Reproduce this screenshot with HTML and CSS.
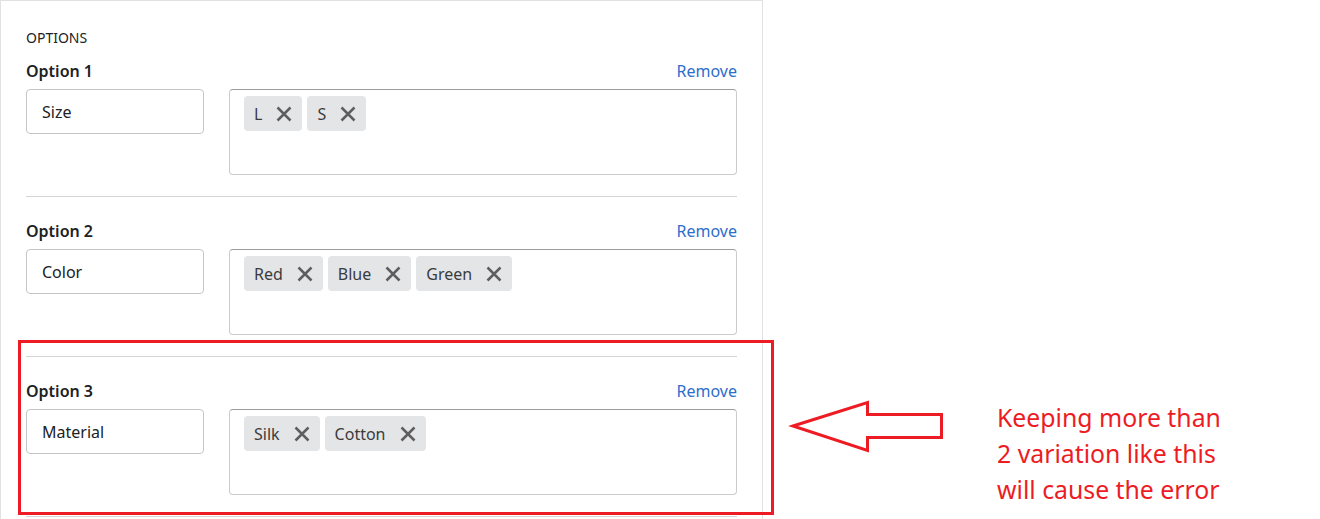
FILE: index.html
```html
<!DOCTYPE html>
<html lang="en">
<head>
<meta charset="utf-8">
<title>Options</title>
<link rel="stylesheet" href="styles.css">
</head>
<body>
<div class="page">
  <div class="card">
    <div class="card-title">OPTIONS</div>

    <div class="option option-first">
      <div class="option-head">
        <span class="option-label">Option 1</span>
        <a class="remove" href="#">Remove</a>
      </div>
      <div class="option-body">
        <div class="name-input">Size</div>
        <div class="values">
          <span class="tag">L<svg class="x" viewBox="0 0 16 16"><path d="M1.5 1.5L14.5 14.5M14.5 1.5L1.5 14.5"/></svg></span>
          <span class="tag">S<svg class="x" viewBox="0 0 16 16"><path d="M1.5 1.5L14.5 14.5M14.5 1.5L1.5 14.5"/></svg></span>
        </div>
      </div>
    </div>

    <div class="option">
      <div class="option-head">
        <span class="option-label">Option 2</span>
        <a class="remove" href="#">Remove</a>
      </div>
      <div class="option-body">
        <div class="name-input">Color</div>
        <div class="values">
          <span class="tag">Red<svg class="x" viewBox="0 0 16 16"><path d="M1.5 1.5L14.5 14.5M14.5 1.5L1.5 14.5"/></svg></span>
          <span class="tag">Blue<svg class="x" viewBox="0 0 16 16"><path d="M1.5 1.5L14.5 14.5M14.5 1.5L1.5 14.5"/></svg></span>
          <span class="tag">Green<svg class="x" viewBox="0 0 16 16"><path d="M1.5 1.5L14.5 14.5M14.5 1.5L1.5 14.5"/></svg></span>
        </div>
      </div>
    </div>

    <div class="option">
      <div class="option-head">
        <span class="option-label">Option 3</span>
        <a class="remove" href="#">Remove</a>
      </div>
      <div class="option-body">
        <div class="name-input">Material</div>
        <div class="values">
          <span class="tag">Silk<svg class="x" viewBox="0 0 16 16"><path d="M1.5 1.5L14.5 14.5M14.5 1.5L1.5 14.5"/></svg></span>
          <span class="tag">Cotton<svg class="x" viewBox="0 0 16 16"><path d="M1.5 1.5L14.5 14.5M14.5 1.5L1.5 14.5"/></svg></span>
        </div>
      </div>
    </div>
  </div>

  <div class="highlight"></div>
  <svg class="arrow" viewBox="0 0 190 70" width="190" height="70">
    <polygon points="23,36 97.5,12.5 97.5,24.5 171.5,24.5 171.5,47.5 97.5,47.5 97.5,60.5"/>
  </svg>
  <div class="note">Keeping more than<br>2 variation like this<br>will cause the error</div>
</div>
</body>
</html>
```
FILE: styles.css
```css
html, body {
  margin: 0;
  padding: 0;
  background: #ffffff;
}

body {
  font-family: "Noto Sans", "Open Sans", sans-serif;
  color: #202223;
  overflow: hidden;
}

.page {
  position: relative;
  width: 1320px;
  height: 519px;
}

.card {
  width: 711px;
  padding: 27px 25px 40px;
  border: 1px solid #dfe1e3;
}

.card-title {
  font-size: 14px;
  line-height: 20px;
  margin-bottom: 11px;
  color: #202223;
}

.option {
  padding-top: 22px;
  padding-bottom: 21px;
  border-bottom: 1px solid #d2d5d8;
}

.option-first {
  padding-top: 0;
}

.option-head {
  display: flex;
  justify-content: space-between;
  align-items: baseline;
  height: 24px;
  margin-bottom: 6px;
}

.option-label {
  font-size: 16px;
  line-height: 24px;
  font-weight: 600;
  color: #202223;
}

.remove {
  font-size: 16px;
  line-height: 24px;
  color: #2c6ecb;
  text-decoration: none;
}

.option-body {
  display: grid;
  grid-template-columns: 178px 1fr;
  column-gap: 25px;
  align-items: start;
}

.name-input {
  box-sizing: border-box;
  height: 45px;
  padding: 1px 15px 0;
  border: 1px solid #c4c6c8;
  border-radius: 4px;
  display: flex;
  align-items: center;
  font-size: 16px;
  color: #202223;
}

.values {
  box-sizing: border-box;
  height: 86px;
  padding: 6px 14px;
  border: 1px solid #c9cccf;
  border-top-color: #9a9da0;
  border-radius: 4px;
  display: flex;
  flex-wrap: wrap;
  align-content: flex-start;
  gap: 5px;
}

.tag {
  display: inline-flex;
  align-items: center;
  height: 35px;
  padding: 0 10px;
  background: #e4e5e7;
  border-radius: 4px;
  font-size: 16px;
  color: #3a3b3c;
}

.x {
  width: 16px;
  height: 16px;
  margin-left: 14px;
  fill: none;
  stroke: #5c5f62;
  stroke-width: 2.5;
}

.highlight {
  position: absolute;
  left: 18px;
  top: 340px;
  width: 750px;
  height: 169px;
  border: 3px solid #ed1c24;
}

.arrow {
  position: absolute;
  left: 770px;
  top: 390px;
}

.arrow polygon {
  fill: #ffffff;
  stroke: #ed1c24;
  stroke-width: 3;
}

.note {
  position: absolute;
  left: 997px;
  top: 399px;
  font-size: 24.8px;
  line-height: 36px;
  color: #ed1c24;
  white-space: nowrap;
}
```
